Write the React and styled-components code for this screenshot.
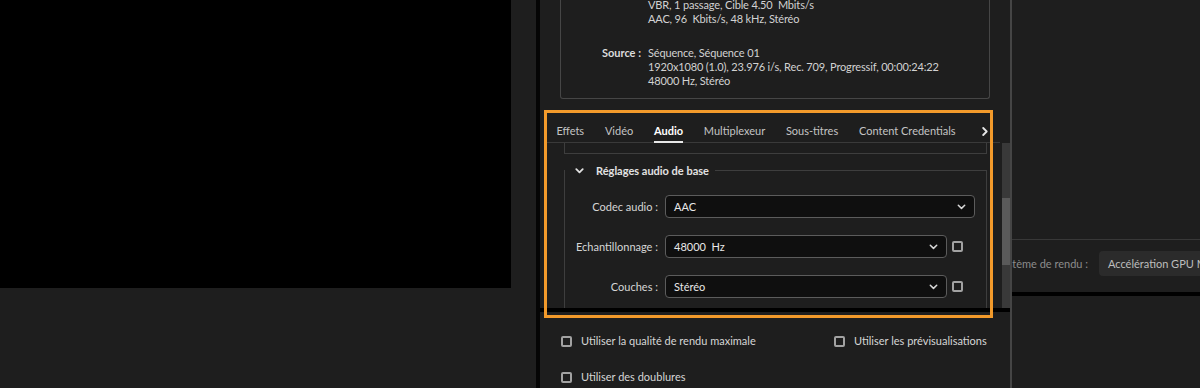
import React from 'react'
import styled, { createGlobalStyle } from 'styled-components'

const GlobalStyle = createGlobalStyle`
  html, body {
    margin: 0;
    padding: 0;
    background: #1e1e1e;
  }
  body {
    font-family: Lato, 'Open Sans', sans-serif;
    font-size: 11px;
    color: #cfcfcf;
  }
  * {
    box-sizing: border-box;
  }
`

const Screen = styled.div`
  display: flex;
  width: 1200px;
  height: 388px;
  overflow: hidden;
  background: #1e1e1e;
`

const LeftColumn = styled.div`
  width: 536px;
  flex: none;
`

const Preview = styled.div`
  width: 511px;
  height: 288px;
  background: #000;
`

const Divider = styled.div`
  width: 4px;
  flex: none;
  background: #050505;
`

const Panel = styled.div`
  position: relative;
  width: 470px;
  flex: none;
  display: flex;
  flex-direction: column;
  background: #1e1e1e;
`

const Summary = styled.div`
  margin: -2px 20px 0;
  padding-bottom: 10px;
  border: 1px solid #464646;
  border-top: none;
  border-radius: 0 0 3px 3px;
  line-height: 14px;
  color: #d2d2d2;
  white-space: pre;
`

const SummaryGroup = styled.div`
  display: grid;
  grid-template-columns: 80px 1fr;
  column-gap: 7px;
  & + & {
    margin-top: 20px;
  }
`

const SummaryLabel = styled.div`
  text-align: right;
  font-weight: 700;
  color: #dcdcdc;
`

const SummaryValue = styled.div`
  letter-spacing: -0.15px;
`

const Settings = styled.div`
  margin-top: 11px;
  padding-left: 6px;
  display: flex;
  flex-direction: column;
`

const TabBar = styled.div`
  display: flex;
  height: 33px;
  margin-right: 10px;
  border-bottom: 1px solid #3a3a3a;
`

const Tab = styled.div`
  position: relative;
  display: flex;
  align-items: flex-end;
  padding: 0 10.4px 4px;
  line-height: 14px;
  white-space: nowrap;
  color: ${(p) => (p.active ? '#ffffff' : '#c4c4c4')};
  font-weight: ${(p) => (p.active ? 700 : 400)};
  &::after {
    content: '';
    display: ${(p) => (p.active ? 'block' : 'none')};
    position: absolute;
    left: 10.4px;
    right: 10.4px;
    bottom: -1px;
    height: 2px;
    background: #e8e8e8;
  }
`

const TabMore = styled.div`
  margin-left: auto;
  padding: 0 12px 6px 0;
  display: flex;
  align-items: flex-end;
`

const Body = styled.div`
  display: flex;
  height: 165px;
`

const ScrollContent = styled.div`
  flex: 1;
  overflow: hidden;
  padding: 0 15px 0 18px;
`

const Scrollbar = styled.div`
  width: 8px;
  flex: none;
  background: #393939;
  padding-top: 55px;
`

const Thumb = styled.div`
  height: 67px;
  background: #5a5a5a;
`

const PrevSection = styled.div`
  height: 11px;
  border: 1px solid #3e3e3e;
  border-top: none;
`

const Group = styled.fieldset`
  margin: 9px 0 0;
  padding: 17px 11px 20px 0;
  min-width: 0;
  border: 1px solid #3e3e3e;
`

const Legend = styled.legend`
  padding: 0 6px 0 10px;
  line-height: 14px;
`

const LegendInner = styled.span`
  display: inline-flex;
  align-items: center;
  gap: 12px;
  font-weight: 700;
  color: #e2e2e2;
`

const FieldRow = styled.div`
  display: grid;
  grid-template-columns: 93px 1fr;
  column-gap: 7px;
  align-items: center;
  & + & {
    margin-top: 17px;
  }
`

const FieldLabel = styled.div`
  text-align: right;
  color: #d6d6d6;
  white-space: nowrap;
`

const Control = styled.div`
  display: flex;
  align-items: center;
  gap: 5px;
  padding-right: ${(p) => (p.withCheck ? '12px' : '0')};
`

const Select = styled.div`
  flex: 1;
  height: 23px;
  display: flex;
  align-items: center;
  justify-content: space-between;
  padding: 0 8px 0 8px;
  border: 1px solid #5c5c5c;
  border-radius: 4px;
  background: #0f0f0f;
  color: #e8e8e8;
  white-space: pre;
`

const Check = styled.span`
  width: 11px;
  height: 11px;
  flex: none;
  border: 2px solid #a2a2a2;
  border-radius: 2px;
`

const BlackRule = styled.div`
  height: 4px;
  background: #000;
`

const Options = styled.div`
  display: grid;
  grid-template-columns: 273px auto;
  row-gap: 22px;
  padding: 22px 0 0 21px;
  line-height: 14px;
`

const Option = styled.div`
  display: flex;
  align-items: center;
  gap: 9px;
  color: #d6d6d6;
  white-space: nowrap;
`

const Highlight = styled.div`
  position: absolute;
  left: 4px;
  top: 110px;
  width: 449px;
  height: 208px;
  border: 3px solid #f29a2b;
  pointer-events: none;
`

const RightColumn = styled.div`
  flex: 1;
  min-width: 0;
  overflow: hidden;
  border-left: 2px solid #454545;
  display: flex;
  flex-direction: column;
`

const RightTop = styled.div`
  height: 240px;
  border-bottom: 1px solid #383838;
`

const RenderRow = styled.div`
  height: 52px;
  display: flex;
  align-items: center;
  padding-bottom: 5px;
  gap: 11px;
`

const RenderLabel = styled.div`
  width: 76px;
  flex: none;
  display: flex;
  justify-content: flex-end;
  overflow: hidden;
  white-space: nowrap;
  color: #8c8c8c;
`

const RenderButton = styled.div`
  height: 25px;
  flex: none;
  display: flex;
  align-items: center;
  padding: 0 9px;
  border-radius: 4px;
  background: #2b2b2b;
  color: #bdbdbd;
  white-space: nowrap;
`

const RightRule = styled.div`
  height: 4px;
  background: #000;
`

const Chevron = ({ size = 9, color = '#d8d8d8', width = 1.5 }) => (
  <svg width={size} height={6} viewBox='0 0 9 6' fill='none'>
    <path d='M1.3 1.2 L4.5 4.4 L7.7 1.2' stroke={color} strokeWidth={width} strokeLinecap='round' strokeLinejoin='round' />
  </svg>
)

const ChevronRight = () => (
  <svg width={6} height={9} viewBox='0 0 6 9' fill='none'>
    <path d='M1.2 1 L4.7 4.5 L1.2 8' stroke='#e6e6e6' strokeWidth={1.8} strokeLinecap='round' strokeLinejoin='round' />
  </svg>
)

const tabs = ['Effets', 'Vidéo', 'Audio', 'Multiplexeur', 'Sous-titres', 'Content Credentials']

const fields = [
  { label: 'Codec audio :', value: 'AAC', check: false },
  { label: 'Echantillonnage :', value: '48000  Hz', check: true },
  { label: 'Couches :', value: 'Stéréo', check: true }
]

const App = () => {
  return (
    <>
      <GlobalStyle />
      <Screen>
        <LeftColumn>
          <Preview />
        </LeftColumn>
        <Divider />
        <Panel>
          <Summary>
            <SummaryGroup>
              <SummaryLabel />
              <SummaryValue>
                <div>VBR, 1 passage, Cible 4.50  Mbits/s</div>
                <div>AAC, 96  Kbits/s, 48 kHz, Stéréo</div>
              </SummaryValue>
            </SummaryGroup>
            <SummaryGroup>
              <SummaryLabel>Source :</SummaryLabel>
              <SummaryValue>
                <div>Séquence, Séquence 01</div>
                <div>1920x1080 (1.0), 23.976 i/s, Rec. 709, Progressif, 00:00:24:22</div>
                <div>48000 Hz, Stéréo</div>
              </SummaryValue>
            </SummaryGroup>
          </Summary>

          <Settings>
            <TabBar>
              {tabs.map((tab) => (
                <Tab key={tab} active={tab === 'Audio'}>
                  {tab}
                </Tab>
              ))}
              <TabMore>
                <ChevronRight />
              </TabMore>
            </TabBar>
            <Body>
              <ScrollContent>
                <PrevSection />
                <Group>
                  <Legend>
                    <LegendInner>
                      <Chevron size={9} color='#e0e0e0' width={1.8} />
                      Réglages audio de base
                    </LegendInner>
                  </Legend>
                  {fields.map((field) => (
                    <FieldRow key={field.label}>
                      <FieldLabel>{field.label}</FieldLabel>
                      <Control withCheck={field.check}>
                        <Select>
                          <span>{field.value}</span>
                          <Chevron />
                        </Select>
                        {field.check && <Check />}
                      </Control>
                    </FieldRow>
                  ))}
                </Group>
              </ScrollContent>
              <Scrollbar>
                <Thumb />
              </Scrollbar>
            </Body>
          </Settings>

          <BlackRule />

          <Options>
            <Option>
              <Check />
              Utiliser la qualité de rendu maximale
            </Option>
            <Option>
              <Check />
              Utiliser les prévisualisations
            </Option>
            <Option>
              <Check />
              Utiliser des doublures
            </Option>
          </Options>

          <Highlight />
        </Panel>
        <RightColumn>
          <RightTop />
          <RenderRow>
            <RenderLabel>
              <span>Système de rendu :</span>
            </RenderLabel>
            <RenderButton>Accélération GPU Mercury Playback Engine (CUDA)</RenderButton>
          </RenderRow>
          <RightRule />
        </RightColumn>
      </Screen>
    </>
  )
}

export default App
